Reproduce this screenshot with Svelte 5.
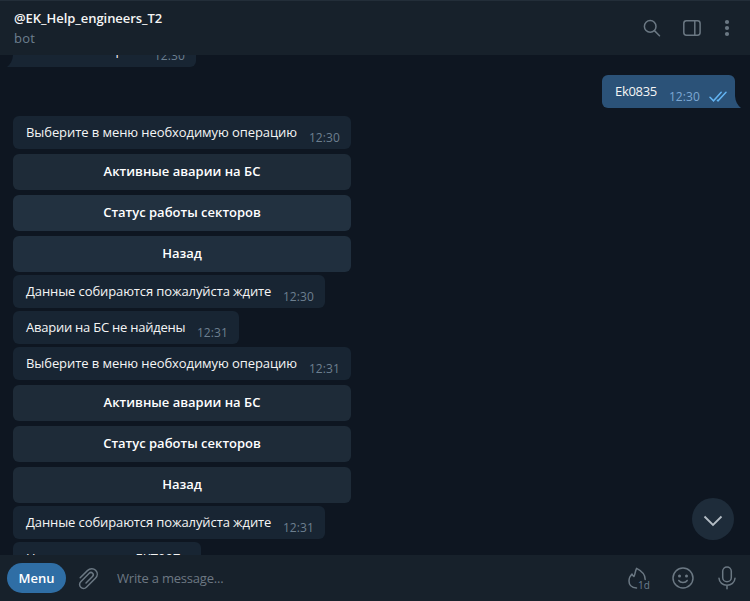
<script>
  const menu = ['Активные аварии на БС', 'Статус работы секторов', 'Назад'];
  const messages = [
    { text: 'Ek0835', time: '12:30', out: true, width: 133, track: -0.3 },
    { text: 'Выберите в меню необходимую операцию', time: '12:30', width: 338, track: -0.075, buttons: menu, lit: true },
    { text: 'Данные собираются пожалуйста ждите', time: '12:30', width: 312, track: -0.1 },
    { text: 'Аварии на БС не найдены', time: '12:31', width: 226, track: -0.24 },
    { text: 'Выберите в меню необходимую операцию', time: '12:31', width: 338, track: -0.075, buttons: menu },
    { text: 'Данные собираются пожалуйста ждите', time: '12:31', width: 312, track: -0.1 },
    { text: 'Номер станции   EKT007', time: '', width: 188, track: 0.08 }
  ];
</script>

<div class="app">
  <header>
    <div class="who">
      <div class="name">@EK_Help_engineers_T2</div>
      <div class="sub">bot</div>
    </div>
    <svg class="tools" width="100" height="24" viewBox="0 0 100 24" fill="none" stroke="#6b7883" stroke-width="1.5">
      <circle cx="10.2" cy="10.4" r="5.8" />
      <path d="M14.4 14.6L19.5 19.7" stroke-linecap="round" />
      <rect x="43.8" y="4.8" width="16.3" height="14.4" rx="2.6" />
      <path d="M54.8 5V19" />
      <g fill="#6b7883" stroke="none"><circle cx="87" cy="6" r="2.1" /><circle cx="87" cy="12" r="2.1" /><circle cx="87" cy="18" r="2.1" /></g>
    </svg>
  </header>

  <main>
    <div class="row earlier">
      <div class="bubble" style:width="183px">
        <span class="text">Укажите номер БС</span><time>12:30</time>
        <svg class="tail left" width="6" height="12" viewBox="0 0 6 12"><path d="M6 0V12H0Q5.5 7.5 6 0Z" fill="#182533" /></svg>
      </div>
    </div>
    {#each messages as m}
      <div class="row" class:out={m.out}>
        <div class="bubble" style:width="{m.width}px">
          <span class="text" style:letter-spacing="{m.track}px">{m.text}</span><time>{m.time}</time>
          {#if m.out}
            <svg class="checks" width="18" height="11" viewBox="0 0 18 11" fill="none" stroke="#63b4f2" stroke-width="1.5" stroke-linecap="round">
              <path d="M1 6.3L4.5 9.8L12.2 1.3M8.4 9.2L9 9.8L17 1.3" />
            </svg>
            <svg class="tail right" width="6" height="12" viewBox="0 0 6 12"><path d="M0 0V12H6Q.5 7.5 0 0Z" fill="#2b5278" /></svg>
          {/if}
        </div>
        {#if m.buttons}
          <div class="keyboard" class:lit={m.lit}>
            {#each m.buttons as label}<button>{label}</button>{/each}
          </div>
        {/if}
      </div>
    {/each}
    <div class="down">
      <svg width="20" height="12" viewBox="0 0 20 12" fill="none" stroke="#b4bdc5" stroke-width="1.8"><path d="M1.5 1.5L10 10L18.5 1.5" /></svg>
    </div>
  </main>

  <footer>
    <button class="menu">Menu</button>
    <svg class="clip" width="22" height="24" viewBox="0 0 22 24" fill="none" stroke="#6b7883" stroke-width="1.5" stroke-linecap="round">
      <path d="M2.2 10.8L9.4 3.6C12 1 15.5 1.1 17.6 3.2C19.8 5.4 19.8 8.8 17.4 11.2L8.4 20.2C6.8 21.8 4.3 21.8 2.8 20.3C1.2 18.7 1.2 16.3 2.8 14.7L11.2 6.3C12.3 5.2 13.7 5.3 14.6 6.2C15.5 7.1 15.5 8.5 14.5 9.5L8 16" />
    </svg>
    <span class="placeholder">Write a message...</span>
    <div class="timer">
      <svg width="20" height="24" viewBox="0 0 20 24" fill="none" stroke="#6b7883" stroke-width="1.5" stroke-linecap="round" stroke-linejoin="round">
        <path d="M8.5 21C3.8 20.6 1 17.8 1 14C1 11.2 2.2 8.8 4 7C4.4 8.2 4.9 9 6 9.5C7.2 7.2 7.1 4 8.6 1.3C13.6 3.8 17.3 8.3 17.2 12.5" />
      </svg>
      <span>1d</span>
    </div>
    <svg class="smile" width="22" height="22" viewBox="0 0 22 22" fill="none" stroke="#6b7883" stroke-width="1.5" stroke-linecap="round">
      <circle cx="11" cy="11" r="10" />
      <path d="M6.8 13.5C8.4 16.2 13.6 16.2 15.2 13.5" />
      <circle cx="7.5" cy="9" r="1.5" fill="#6b7883" stroke="none" /><circle cx="14.5" cy="9" r="1.5" fill="#6b7883" stroke="none" />
    </svg>
    <svg class="mic" width="18" height="24" viewBox="0 0 18 24" fill="none" stroke="#6b7883" stroke-width="1.5" stroke-linecap="round">
      <rect x="4.7" y="1" width="8.6" height="14.8" rx="4.3" />
      <path d="M1 12.2C1.3 16.5 4.8 19.3 9 19.3S16.7 16.5 17 12.2M9 19.3V22.7" />
    </svg>
  </footer>
</div>

<style>
  .app { width: 750px; height: 601px; display: flex; flex-direction: column; background: #0e1621; color: #f5f5f5; font: 13px/18px "Open Sans", sans-serif; overflow: hidden; }
  header { height: 55px; flex: none; box-sizing: border-box; background: #17212b; border-top: 1px solid #232e39; display: flex; justify-content: space-between; padding: 7px 10px 0 14px; }
  .name { font-weight: 600; line-height: 20px; letter-spacing: -0.05px; }
  .sub { color: #6d7f8f; line-height: 20px; letter-spacing: 0.2px; }
  .tools { margin-top: 8px; }
  main { flex: 1; min-height: 0; overflow: hidden; position: relative; display: flex; flex-direction: column; gap: 3px; }
  .row { flex: none; display: flex; flex-direction: column; align-items: flex-start; padding-left: 13px; }
  .row.earlier { margin-top: -21px; }
  .row.out { align-items: flex-end; padding: 0 15px 0 0; margin: 5px 0; }
  .bubble { position: relative; height: 33px; box-sizing: border-box; display: flex; background: #182533; border-radius: 6px; padding: 7px 11px 0 13px; white-space: pre; }
  .text { flex: 1; }
  time { color: #6d7f8f; margin-top: 6px; font-size: 12px; letter-spacing: 0.1px; }
  .out .bubble { background: #2b5278; }
  .out time { color: #7da8d3; }
  .checks { margin: 9px -3px 0 9px; }
  .tail { position: absolute; bottom: 0; }
  .tail.left { left: -6px; }
  .tail.right { right: -6px; }
  .earlier .bubble { border-bottom-left-radius: 0; }
  .out .bubble { border-bottom-right-radius: 0; }
  .keyboard { width: 338px; display: flex; flex-direction: column; gap: 5px; margin-top: 5px; }
  button { font: 600 13px/18px "Open Sans", sans-serif; color: #fff; border: 0; padding: 0; }
  .keyboard button { height: 36px; border-radius: 6px; background: #1e2b38; padding: 0 0 2px 0; }
  .lit button:nth-child(2) { background: #223140; }
  .lit button:nth-child(3) { background: #202f3e; }
  .down { position: absolute; right: 16px; bottom: 15px; width: 42px; height: 42px; border-radius: 50%; background: #1e2c3a; display: flex; align-items: center; justify-content: center; padding-top: 3px; box-sizing: border-box; }
  footer { height: 46px; flex: none; background: #17212b; display: flex; align-items: center; padding: 0 14px 0 7px; box-sizing: border-box; }
  .menu { width: 59px; height: 30px; border-radius: 15px; background: #2f6ea5; }
  .clip { margin: 2px 0 0 12px; }
  .placeholder { margin-left: 17px; color: #6d7883; flex: 1; letter-spacing: -0.2px; }
  .timer { display: flex; position: relative; margin: 2px 24px 0 0; }
  .timer span { position: absolute; left: 10px; bottom: 0; font-size: 10px; line-height: 12px; color: #6d7f8f; }
  .smile { margin-right: 24px; }
</style>
